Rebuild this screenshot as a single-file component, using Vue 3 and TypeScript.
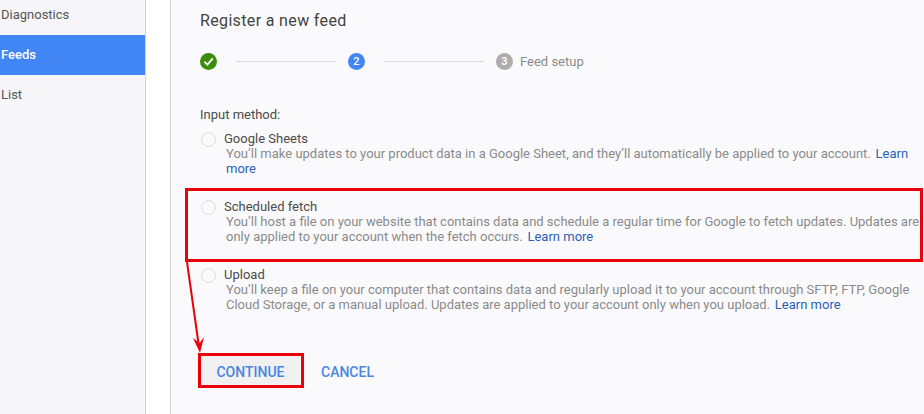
<script setup lang="ts">
interface Option { id: string; label: string; text: string; link: string }
const navItems = [
  { label: 'Diagnostics', active: false },
  { label: 'Feeds', active: true },
  { label: 'List', active: false },
]
const options: Option[] = [
  {
    id: 'sheets',
    label: 'Google Sheets',
    text: 'You’ll make updates to your product data in a Google Sheet, and they’ll automatically be applied to your account. ',
    link: 'Learn more',
  },
  {
    id: 'fetch',
    label: 'Scheduled fetch',
    text: 'You’ll host a file on your website that contains data and schedule a regular time for Google to fetch updates. Updates are only applied to your account when the fetch occurs. ',
    link: 'Learn more',
  },
  {
    id: 'upload',
    label: 'Upload',
    text: 'You’ll keep a file on your computer that contains data and regularly upload it to your account through SFTP, FTP, Google Cloud Storage, or a manual upload. Updates are applied to your account only when you upload. ',
    link: 'Learn more',
  },
]
</script>

<template>
  <div class="page">
    <nav class="sidebar">
      <a v-for="item in navItems" :key="item.label" class="nav-item" :class="{ active: item.active }">{{ item.label }}</a>
    </nav>
    <div class="gutter"></div>
    <main class="main">
      <h1 class="title">Register a new feed</h1>
      <div class="stepper">
        <svg class="step-icon" width="17" height="17" viewBox="0 0 17 17">
          <circle cx="8.5" cy="8.5" r="8.5" fill="#3d8c0c" />
          <path d="M4.4 8.6l3 3 5.4-6.2" fill="none" stroke="#fff" stroke-width="1.8" />
        </svg>
        <span class="line"></span>
        <span class="num current">2</span>
        <span class="line"></span>
        <span class="num todo">3</span>
        <span class="step-label">Feed setup</span>
      </div>
      <div class="input-label">Input method:</div>
      <div class="options">
        <div v-for="o in options" :key="o.id" class="option">
          <span class="radio"></span>
          <div class="option-body">
            <div class="option-label">{{ o.label }}</div>
            <p class="option-text">{{ o.text }}<a class="link">{{ o.link }}</a></p>
          </div>
        </div>
      </div>
      <div class="actions">
        <button class="btn primary">CONTINUE</button>
        <button class="btn">CANCEL</button>
      </div>
    </main>

    <div class="mark mark-option"></div>
    <div class="mark mark-button"></div>
    <svg class="arrow" width="30" height="100" viewBox="0 0 30 100">
      <path d="M3 1L15 86" fill="none" stroke="#e8000b" stroke-width="2" />
      <path d="M16 92L9 77L15.5 82L20 76Z" fill="#e8000b" />
    </svg>
  </div>
</template>

<style>
html, body { margin: 0; background: #fafafc; overflow: hidden; }
</style>

<style scoped>
.page {
  position: relative;
  display: flex;
  width: 924px;
  height: 414px;
  overflow: hidden;
  font-family: Roboto, "Liberation Sans", sans-serif;
  font-size: 13px;
  color: #4a4a4a;
  background: #fafafc;
}
.sidebar {
  flex: none;
  width: 145px;
  margin-top: -5px;
  background: #f6f6f8;
  border-right: 1px solid #d4d4d6;
}
.nav-item {
  display: flex;
  align-items: center;
  height: 40px;
  padding: 0 0 2px 1px;
  box-sizing: border-box;
  color: #555;
}
.nav-item.active { background: #4285f4; color: #fff; font-weight: 500; }
.gutter { flex: none; width: 24px; background: #fff; }
.main {
  flex: 1;
  min-width: 0;
  border-left: 1px solid #d4d4d6;
  padding-left: 29px;
  background: #fafafc;
}
.title {
  margin: 11px 0 0;
  font-size: 16px;
  line-height: 20px;
  font-weight: 400;
  letter-spacing: 0.35px;
  color: #444;
}
.stepper {
  display: flex;
  align-items: center;
  height: 17px;
  margin-top: 22px;
}
.step-icon { flex: none; }
.line { flex: none; width: 100px; height: 1px; background: #d8d8d8; margin: 0 12px 0 19px; }
.num {
  flex: none;
  width: 17px;
  height: 17px;
  border-radius: 50%;
  display: flex;
  align-items: center;
  justify-content: center;
  color: #fff;
  font-size: 11px;
  font-weight: 500;
}
.current { background: #4285f4; }
.todo { background: #adadad; }
.step-label { margin-left: 7px; color: #8a8a8a; font-size: 13px; }
.input-label { margin-top: 37px; line-height: 15px; color: #4a4a4a; }
.options { margin-top: 10px; }
.option { display: flex; height: 68px; margin-left: 1px; }
.radio {
  flex: none;
  width: 13px;
  height: 13px;
  border: 1px solid #dcdcdc;
  border-radius: 50%;
  background: #fafafa;
}
.option-body { margin-left: 8px; width: 698px; }
.option-label { line-height: 14px; color: #4a4a4a; }
.option-text { margin: 0 0 0 2px; line-height: 15px; color: #8a8a8a; }
.link { color: #2b5fb8; margin-left: 1.5px; }
.actions { display: flex; align-items: center; margin-top: 19px; margin-left: 1px; }
.btn {
  font: 500 14px Roboto, "Liberation Sans", sans-serif;
  color: #4a86e0;
  background: transparent;
  border: 0;
  height: 32px;
  padding: 1px 0 0;
}
.btn.primary { background: #f0f0f0; width: 99px; margin-right: 21px; }
.mark { position: absolute; border: 3px solid #e8000b; box-sizing: border-box; }
.mark-option { left: 185px; top: 188px; width: 738px; height: 74px; }
.mark-button { left: 198px; top: 353px; width: 106px; height: 35px; }
.arrow { position: absolute; left: 184px; top: 261px; }
</style>
